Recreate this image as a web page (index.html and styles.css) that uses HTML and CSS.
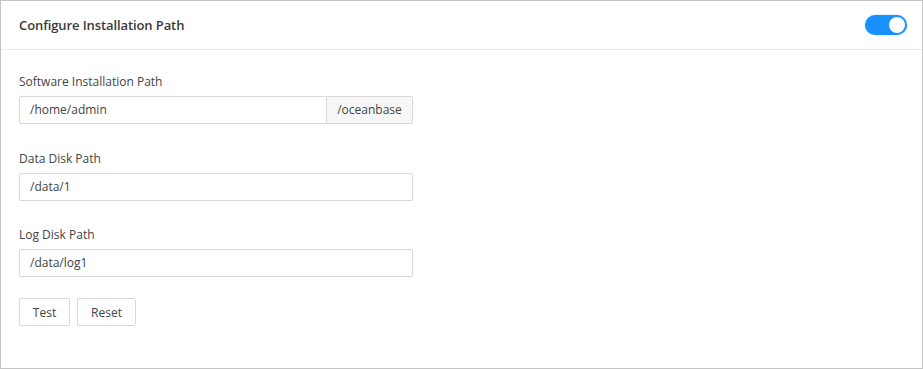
FILE: index.html
```html
<!DOCTYPE html>
<html>
<head>
    <meta charset="UTF-8">
    <link rel="stylesheet" href="styles.css">
</head>
<body>
    <div class="card">
        <div class="card-header">
            <span class="card-title">Configure Installation Path</span>
            <span class="switch"><span class="switch-handle"></span></span>
        </div>
        <div class="card-body">
            <div class="form-item">
                <div class="form-label">Software Installation Path</div>
                <div class="input-group">
                    <div class="input input-main">/home/admin</div>
                    <div class="input-addon">/oceanbase</div>
                </div>
            </div>
            <div class="form-item">
                <div class="form-label">Data Disk Path</div>
                <div class="input">/data/1</div>
            </div>
            <div class="form-item">
                <div class="form-label">Log Disk Path</div>
                <div class="input">/data/log1</div>
            </div>
            <div class="actions">
                <button class="btn btn-test">Test</button>
                <button class="btn btn-reset">Reset</button>
            </div>
        </div>
    </div>
</body>
</html>
```

FILE: styles.css
```css
body {
    margin: 0;
    padding: 0;
    font-family: "Open Sans", "Noto Sans", Arial, sans-serif;
    font-size: 12px;
    color: #333;
    background: white;
}
.card {
    width: 923px;
    height: 369px;
    box-sizing: border-box;
    border: 1px solid #c4c4c4;
    background: white;
}
.card-header {
    height: 48px;
    border-bottom: 1px solid #ebebeb;
    display: flex;
    justify-content: space-between;
    align-items: center;
    padding: 0 15px 0 18px;
}
.card-title {
    font-size: 13px;
    font-weight: 600;
    color: #3a3a3a;
    letter-spacing: -0.1px;
}
.switch {
    width: 42px;
    height: 20px;
    border-radius: 10px;
    background-color: #1890ff;
    box-shadow: 0 0 2px rgba(24, 144, 255, 0.4);
    position: relative;
}
.switch-handle {
    position: absolute;
    top: 2px;
    right: 2px;
    width: 16px;
    height: 16px;
    border-radius: 50%;
    background: white;
}
.card-body {
    padding: 22px 18px 0 18px;
}
.form-item {
    width: 394px;
    margin-bottom: 24.5px;
}
.form-label {
    line-height: 20px;
    margin-bottom: 4px;
    color: #444;
}
.input {
    height: 28px;
    box-sizing: border-box;
    border: 1px solid #d9d9d9;
    border-radius: 2px;
    padding: 0 10px;
    line-height: 26px;
    color: #444;
}
.input-group {
    display: flex;
}
.input-main {
    flex: 1;
    border-radius: 2px 0 0 2px;
}
.input-addon {
    width: 86px;
    height: 28px;
    box-sizing: border-box;
    border: 1px solid #d9d9d9;
    border-left: none;
    border-radius: 0 2px 2px 0;
    background-color: #f7f7f7;
    line-height: 26px;
    text-align: center;
    color: #444;
}
.actions {
    display: flex;
    gap: 7px;
    margin-top: -3.5px;
}
.btn {
    height: 28px;
    box-sizing: border-box;
    border: 1px solid #d9d9d9;
    border-radius: 2px;
    background: white;
    font-family: inherit;
    font-size: 12px;
    color: #444;
    padding: 0;
    cursor: pointer;
}
.btn-test {
    width: 51px;
}
.btn-reset {
    width: 59px;
}
```
